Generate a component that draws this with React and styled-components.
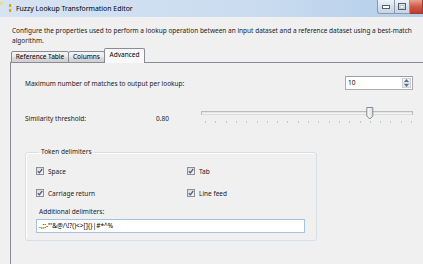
import React from 'react';
import styled, { createGlobalStyle } from 'styled-components';

const GlobalStyle = createGlobalStyle`
  html, body {
    margin: 0;
    padding: 0;
    overflow: hidden;
  }
  body {
    width: 423px;
    height: 264px;
    background: #f0f0f0;
    font-family: "Noto Sans", "Open Sans", sans-serif;
    font-size: 6.5px;
    color: #1b1b1b;
  }
`;

// 창 전체
const Window = styled.div`
  width: 423px;
  height: 264px;
  overflow: hidden;
  display: flex;
  flex-direction: column;
  background: #f0f0f0;
`;

const TitleBar = styled.div`
  height: 17px;
  flex-shrink: 0;
  display: grid;
  grid-template-columns: 14px auto 1fr 18px 15px 13px;
  align-items: start;
  background: linear-gradient(to right, #d5e3f3 0%, #cadcf0 60%, #b3cdea 100%);
`;

const TitleText = styled.div`
  margin-left: 2px;
  line-height: 17px;
  font-size: 6.9px;
  color: #000;
  white-space: nowrap;
`;

const CaptionButton = styled.div`
  grid-column: ${(p) => p.$col};
  height: 14px;
  box-sizing: border-box;
  border: 1px solid ${(p) => (p.$close ? '#9a3a30' : '#8d9aab')};
  border-top: none;
  border-left-width: ${(p) => (p.$first ? 1 : 0)}px;
  background-color: ${(p) => (p.$close ? '#cd4f3e' : '#d6e1ee')};
  background-image: ${(p) =>
    p.$close
      ? 'linear-gradient(#e8a393, #d25a48 50%, #c03a2a)'
      : 'linear-gradient(#eef3f9, #d6e1ee 50%, #c6d4e5)'};
  display: flex;
  align-items: center;
  justify-content: center;
  border-radius: ${(p) => (p.$first ? '0 0 0 3px' : '0')};
`;

const Client = styled.div`
  width: 480px;
  flex: 1;
  display: flex;
  flex-direction: column;
`;

const Description = styled.div`
  padding: 9px 0 0 12px;
  line-height: 10px;
  white-space: nowrap;
`;

const TabStrip = styled.div`
  display: flex;
  align-items: flex-end;
  height: 14px;
  margin-top: 3px;
  padding-left: 11px;
  margin-bottom: -1px;
`;

const Tab = styled.div`
  position: relative;
  z-index: ${(p) => (p.$active ? 1 : 0)};
  box-sizing: border-box;
  width: ${(p) => p.$width}px;
  height: ${(p) => (p.$active ? 15 : 12)}px;
  margin-right: -1px;
  border: 1px solid #898c95;
  border-bottom: ${(p) => (p.$active ? 'none' : '1px solid #898c95')};
  border-radius: 2px 2px 0 0;
  background: ${(p) =>
    p.$active ? '#f9f9f9' : 'linear-gradient(#f3f3f3, #ebebeb 45%, #dddddd 50%, #cfcfcf)'};
  text-align: center;
  line-height: ${(p) => (p.$active ? 11 : 10)}px;
  white-space: nowrap;
  color: #000;
`;

const Panel = styled.div`
  flex: 1;
  margin-left: 10px;
  border-left: 1px solid #898c95;
  border-top: 1px solid #898c95;
  padding: 13px 0 0 14px;
`;

const Inner = styled.div`
  width: 388px;
  display: flex;
  flex-direction: column;
`;

const MatchRow = styled.div`
  display: flex;
  align-items: center;
  justify-content: space-between;
  height: 14px;
`;

const SpinBox = styled.div`
  width: 68px;
  height: 14px;
  box-sizing: border-box;
  display: flex;
  background: #fff;
  border: 1px solid #abadb3;
  border-top-color: #9aa0a8;
`;

const SpinValue = styled.div`
  flex: 1;
  padding-left: 2px;
  line-height: 12px;
  color: #000;
`;

const SpinButtons = styled.div`
  width: 9px;
  display: flex;
  flex-direction: column;
  padding: 1px 1px 1px 0;
`;

const SpinButton = styled.div`
  flex: 1;
  display: flex;
  align-items: center;
  justify-content: center;
  background: linear-gradient(#f6f6f6, #e3e3e3);
  border: 1px solid #d2d2d2;
  margin-top: ${(p) => (p.$down ? -1 : 0)}px;
`;

const SliderRow = styled.div`
  display: flex;
  align-items: flex-start;
  height: 18px;
  margin-top: 16px;
`;

const SliderLabel = styled.div`
  width: ${(p) => p.$width}px;
  padding-top: 8px;
  line-height: 10px;
`;

const Group = styled.fieldset`
  width: 292px;
  box-sizing: border-box;
  margin: 23px 0 0 0;
  padding: 8px 0 7px 10px;
  border: 1px solid #d5dfe5;
  border-radius: 3px;
  box-shadow: inset 1px 1px 0 #fff;
  display: grid;
  grid-template-columns: 151px 1fr;
  row-gap: 10px;
`;

const Legend = styled.legend`
  margin-left: 3px;
  padding: 0 2px;
  line-height: 10px;
`;

const CheckItem = styled.label`
  display: flex;
  align-items: center;
  gap: 4px;
  height: 12px;
`;

const CheckBox = styled.span`
  width: 8px;
  height: 8px;
  box-sizing: border-box;
  border: 1px solid #8f8f8f;
  background: linear-gradient(135deg, #d9d9d9, #f7f7f7);
  display: flex;
  align-items: center;
  justify-content: center;
`;

const FieldLabel = styled.div`
  grid-column: 1 / -1;
  padding-left: 3px;
  line-height: 10px;
  margin-top: -2px;
`;

const TextBox = styled.div`
  grid-column: 1 / -1;
  width: 269px;
  height: 14px;
  box-sizing: border-box;
  margin-top: -8px;
  border: 1px solid #a6c3de;
  background: #fff;
  padding-left: 2px;
  line-height: 12px;
  color: #000;
  white-space: nowrap;
`;

const Check = () => (
  <svg width="6" height="6" viewBox="0 0 6 6">
    <path d="M0.8 3.2 L2.4 4.8 L5.2 1" fill="none" stroke="#4b5f88" strokeWidth="1.3" />
  </svg>
);

const Checkbox = ({ label }) => (
  <CheckItem>
    <CheckBox>
      <Check />
    </CheckBox>
    {label}
  </CheckItem>
);

const AppIcon = () => (
  <svg width="14" height="14" viewBox="0 0 14 14">
    <rect x="0" y="2" width="3" height="3" fill="#f3dc86" />
    <rect x="9" y="4" width="2" height="3" fill="#e8a21a" />
    <rect x="9" y="9" width="2" height="3" fill="#e8a21a" />
    <rect x="11" y="4" width="1" height="8" fill="#f6d27a" />
  </svg>
);

const TrackBar = ({ value }) => {
  const step = 10.3;
  const ticks = Array.from({ length: 21 }, (_, i) => 4 + i * step);
  const tx = 4 + value * 20 * step;
  return (
    <svg width="212" height="18" viewBox="0 0 212 18">
      <rect x="0.5" y="5.5" width="211" height="3" fill="#e6e6e6" stroke="#bcbcbc" />
      <line x1="1" y1="8" x2="211" y2="8" stroke="#fff" />
      {ticks.map((x) => (
        <rect key={x} x={Math.round(x)} y="15" width="1" height="2" fill="#c6c6c6" />
      ))}
      <defs>
        <linearGradient id="thumb" x1="0" x2="1">
          <stop offset="0" stopColor="#fdfdfd" />
          <stop offset="1" stopColor="#dedede" />
        </linearGradient>
      </defs>
      <path
        d={`M${tx - 3} 1.5 H${tx + 3} V10 L${tx} 13 L${tx - 3} 10 Z`}
        fill="url(#thumb)"
        stroke="#7f8896"
      />
    </svg>
  );
};

const Arrow = ({ up }) => (
  <svg width="5" height="3" viewBox="0 0 5 3">
    <path d={up ? 'M0 3 L2.5 0 L5 3 Z' : 'M0 0 L2.5 3 L5 0 Z'} fill="#4c6fa5" />
  </svg>
);

export default function App() {
  return (
    <>
      <GlobalStyle />
      <Window>
        <TitleBar>
          <AppIcon />
          <TitleText>Fuzzy Lookup Transformation Editor</TitleText>
          <CaptionButton $col={4} $first>
            <svg width="8" height="4" viewBox="0 0 8 4">
              <rect x="0.5" y="0.5" width="7" height="3" fill="#fff" stroke="#55606e" />
            </svg>
          </CaptionButton>
          <CaptionButton $col={5}>
            <svg width="8" height="7" viewBox="0 0 8 7">
              <rect x="0.5" y="0.5" width="7" height="6" fill="none" stroke="#55606e" />
              <rect x="2" y="2.5" width="4" height="2.5" fill="#fff" stroke="#8a96a6" strokeWidth="0.5" />
            </svg>
          </CaptionButton>
          <CaptionButton $col={6} $close />
        </TitleBar>

        <Client>
          <Description>
            <div>
              Configure the properties used to perform a lookup operation between an input dataset and a
              reference dataset using a best-match
            </div>
            <div>algorithm.</div>
          </Description>

          <TabStrip>
            <Tab $width={58}>Reference Table</Tab>
            <Tab $width={37}>Columns</Tab>
            <Tab $width={41} $active>
              Advanced
            </Tab>
          </TabStrip>

          <Panel>
            <Inner>
              <MatchRow>
                <span>Maximum number of matches to output per lookup:</span>
                <SpinBox>
                  <SpinValue>10</SpinValue>
                  <SpinButtons>
                    <SpinButton>
                      <Arrow up />
                    </SpinButton>
                    <SpinButton $down>
                      <Arrow />
                    </SpinButton>
                  </SpinButtons>
                </SpinBox>
              </MatchRow>

              <SliderRow>
                <SliderLabel $width={131}>Similarity threshold:</SliderLabel>
                <SliderLabel $width={45}>0.80</SliderLabel>
                <TrackBar value={0.8} />
              </SliderRow>

              <Group>
                <Legend>Token delimiters</Legend>
                <Checkbox label="Space" />
                <Checkbox label="Tab" />
                <Checkbox label="Carriage return" />
                <Checkbox label="Line feed" />
                <FieldLabel>Additional delimiters:</FieldLabel>
                <TextBox>{'.,;:-"\'&@/\\!?()<>[]{}|#*^%'}</TextBox>
              </Group>
            </Inner>
          </Panel>
        </Client>
      </Window>
    </>
  );
}
